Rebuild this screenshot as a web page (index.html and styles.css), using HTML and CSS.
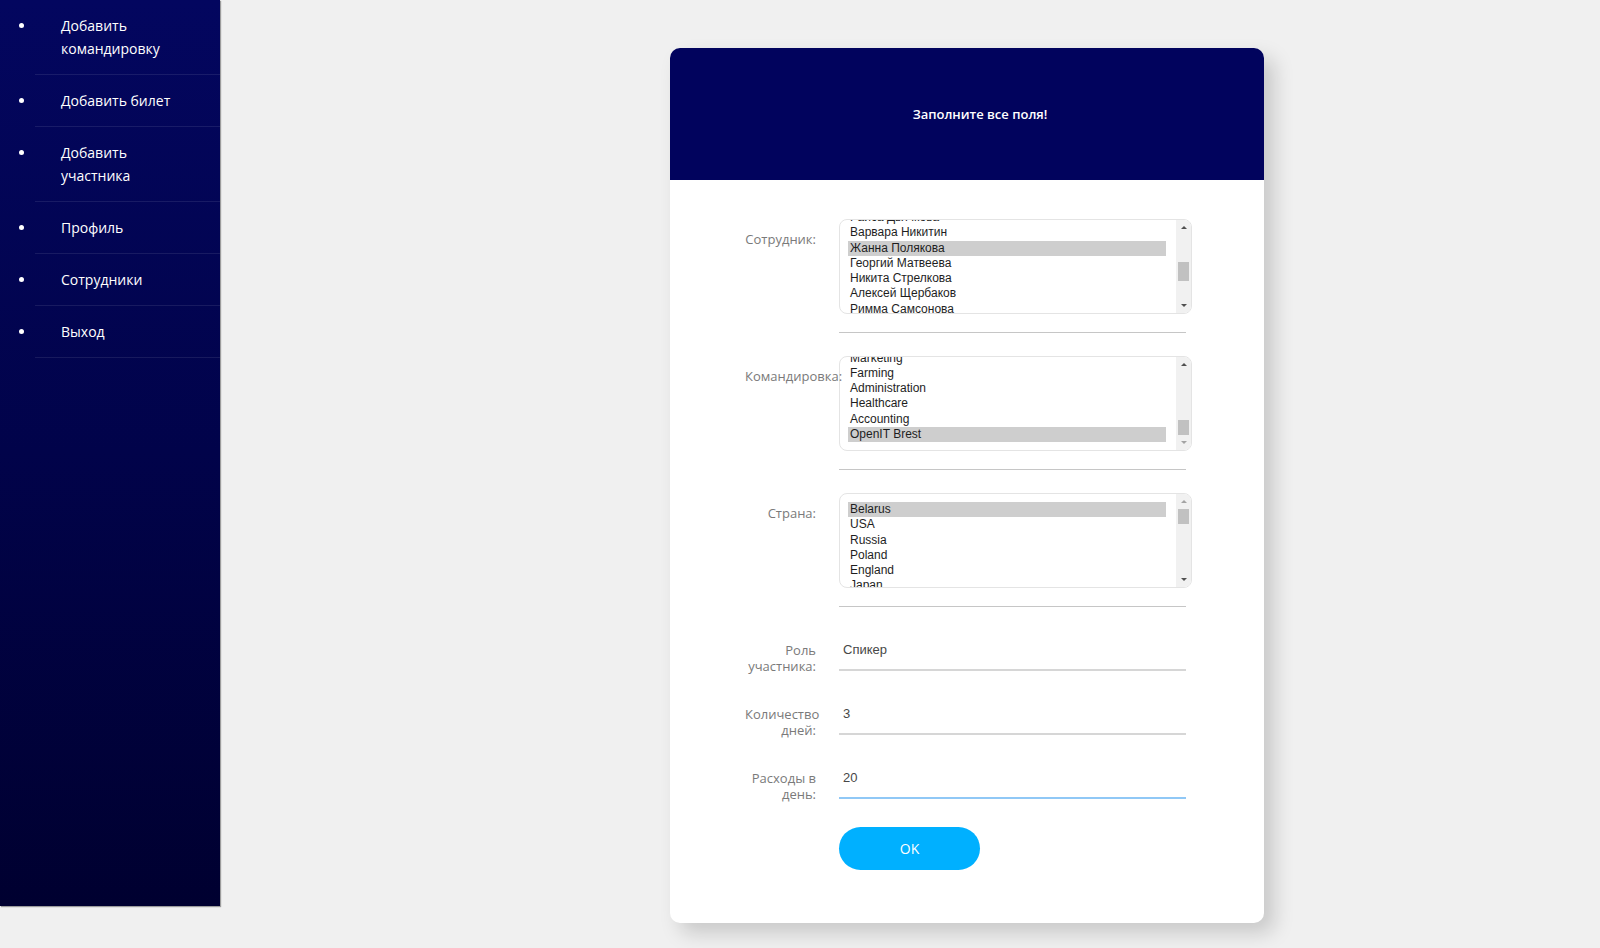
FILE: index.html
```html
<!DOCTYPE html>
<html lang="ru">
<head>
<meta charset="utf-8">
<title>Добавить участника</title>
<link rel="stylesheet" href="styles.css">
</head>
<body>
<div class="page">
  <nav class="sidebar">
    <ul class="menu">
      <li class="menu-item"><a class="menu-link" href="#">Добавить командировку</a></li>
      <li class="menu-item"><a class="menu-link" href="#">Добавить билет</a></li>
      <li class="menu-item"><a class="menu-link" href="#">Добавить участника</a></li>
      <li class="menu-item"><a class="menu-link" href="#">Профиль</a></li>
      <li class="menu-item"><a class="menu-link" href="#">Сотрудники</a></li>
      <li class="menu-item"><a class="menu-link" href="#">Выход</a></li>
    </ul>
  </nav>
  <main class="content">
    <div class="card">
      <div class="card-header">Заполните все поля!</div>
      <form class="card-body">
        <div class="row">
          <label class="lbl">Сотрудник:</label>
          <div class="field field-select">
            <div class="listbox" role="listbox" data-scroll="140">
              <div class="lb-options">
                <div class="lb-gap lb-gap-8" aria-hidden="true"></div>
                <div class="lb-option" role="option">Раиса Дьячкова</div>
                <div class="lb-option" role="option">Варвара Никитин</div>
                <div class="lb-option is-selected" role="option" aria-selected="true">Жанна Полякова</div>
                <div class="lb-option" role="option">Георгий Матвеева</div>
                <div class="lb-option" role="option">Никита Стрелкова</div>
                <div class="lb-option" role="option">Алексей Щербаков</div>
                <div class="lb-option" role="option">Римма Самсонова</div>
                <div class="lb-gap lb-gap-5" aria-hidden="true"></div>
              </div>
              <div class="lb-scrollbar">
                <span class="lb-btn lb-up"></span>
                <div class="lb-track"><div class="lb-thumb"></div></div>
                <span class="lb-btn lb-down"></span>
              </div>
            </div>
          </div>
        </div>
        <div class="row">
          <label class="lbl">Командировка:</label>
          <div class="field field-select">
            <div class="listbox" role="listbox" data-scroll="max">
              <div class="lb-options">
                <div class="lb-gap lb-gap-18" aria-hidden="true"></div>
                <div class="lb-option" role="option">Marketing</div>
                <div class="lb-option" role="option">Farming</div>
                <div class="lb-option" role="option">Administration</div>
                <div class="lb-option" role="option">Healthcare</div>
                <div class="lb-option" role="option">Accounting</div>
                <div class="lb-option is-selected" role="option" aria-selected="true">OpenIT Brest</div>
              </div>
              <div class="lb-scrollbar">
                <span class="lb-btn lb-up"></span>
                <div class="lb-track"><div class="lb-thumb"></div></div>
                <span class="lb-btn lb-down"></span>
              </div>
            </div>
          </div>
        </div>
        <div class="row">
          <label class="lbl">Страна:</label>
          <div class="field field-select">
            <div class="listbox" role="listbox" data-scroll="0">
              <div class="lb-options">
                <div class="lb-option is-selected" role="option" aria-selected="true">Belarus</div>
                <div class="lb-option" role="option">USA</div>
                <div class="lb-option" role="option">Russia</div>
                <div class="lb-option" role="option">Poland</div>
                <div class="lb-option" role="option">England</div>
                <div class="lb-option" role="option">Japan</div>
                <div class="lb-gap lb-gap-18" aria-hidden="true"></div>
              </div>
              <div class="lb-scrollbar">
                <span class="lb-btn lb-up"></span>
                <div class="lb-track"><div class="lb-thumb"></div></div>
                <span class="lb-btn lb-down"></span>
              </div>
            </div>
          </div>
        </div>
        <div class="row">
          <label class="lbl" for="role">Роль участника:</label>
          <div class="field field-input">
            <input class="text-input" id="role" type="text" value="Спикер">
          </div>
        </div>
        <div class="row">
          <label class="lbl" for="days">Количество дней:</label>
          <div class="field field-input">
            <input class="text-input" id="days" type="text" value="3">
          </div>
        </div>
        <div class="row">
          <label class="lbl" for="cost">Расходы в день:</label>
          <div class="field field-input field-active">
            <input class="text-input" id="cost" type="text" value="20">
          </div>
        </div>
        <div class="actions">
          <button class="ok-btn" type="button">OK</button>
        </div>
      </form>
    </div>
  </main>
</div>
<script src="script.js"></script>
</body>
</html>
```

FILE: styles.css
```css
html, body {
  margin: 0;
  padding: 0;
}
body {
  background: #f0f0f0;
  font-family: "Open Sans", "Noto Sans", sans-serif;
}
.page {
  display: flex;
  align-items: flex-start;
}

/* Sidebar */
.sidebar {
  width: 220px;
  height: 906px;
  flex: none;
  background: linear-gradient(to bottom, #03065f 0%, #01034a 50%, #000030 100%);
  box-shadow: 1px 1px 1px rgba(0, 0, 0, 0.35);
}
.menu {
  list-style: none;
  margin: 0;
  padding: 0;
}
.menu-item {
  display: flex;
  align-items: flex-start;
}
.menu-item::before {
  content: "";
  flex: none;
  width: 5px;
  height: 5px;
  border-radius: 50%;
  background: #fff;
  margin: 23px 11px 0 19px;
}
.menu-link {
  flex: 1;
  display: block;
  padding: 14px 30px 14px 26px;
  line-height: 23px;
  font-size: 14px;
  font-weight: 500;
  color: #fff;
  text-decoration: none;
  border-bottom: 1px solid rgba(255, 255, 255, 0.09);
}

/* Content */
.content {
  flex: 1;
}
.card {
  width: 594px;
  margin: 48px 0 26px 450px;
  background: #fff;
  border-radius: 10px;
  box-shadow: 10px 10px 20px rgba(0, 0, 0, 0.17);
  overflow: hidden;
}
.card-header {
  height: 132px;
  background: #01035d;
  color: #fff;
  font-size: 13px;
  font-weight: 600;
  display: flex;
  align-items: center;
  justify-content: center;
  padding-left: 26px;
}
.card-body {
  padding: 16px 78px 53px 75px;
  margin: 0;
}
.row {
  display: flex;
  align-items: flex-start;
  padding-top: 23px;
}
.lbl {
  position: relative;
  z-index: 1;
  width: 71px;
  height: 28px;
  flex: none;
  margin-right: 23px;
  text-align: right;
  font-size: 13px;
  line-height: 16px;
  color: #7a7a7a;
  padding-top: 12px;
}
.field {
  width: 347px;
  flex: none;
}
.field-select {
  padding-bottom: 18px;
  border-bottom: 1px solid #c6c6c6;
}

/* Listbox */
.listbox {
  display: flex;
  width: 353px;
  height: 95px;
  box-sizing: border-box;
  border: 1px solid #e4e4e4;
  border-radius: 8px;
  background: #fff;
  overflow: hidden;
}
.lb-options {
  flex: 1;
  min-width: 0;
  padding: 8px 10px 8px 8px;
  overflow: hidden;
  font-family: "Liberation Sans", Arial, sans-serif;
  font-size: 12px;
  color: #1e1e1e;
}
.lb-option {
  padding: 0 2px;
  line-height: 15.25px;
  height: 15.25px;
  white-space: nowrap;
}
.lb-option.is-selected {
  background: #cecece;
}
.lb-gap-5 {
  height: calc(15.25px * 5);
}
.lb-gap-8 {
  height: calc(15.25px * 8);
}
.lb-gap-18 {
  height: calc(15.25px * 18);
}
.lb-scrollbar {
  width: 15px;
  flex: none;
  display: flex;
  flex-direction: column;
  background: #f1f1f1;
}
.lb-btn {
  flex: none;
  height: 15px;
  display: flex;
  align-items: center;
  justify-content: center;
}
.lb-btn::before {
  content: "";
  width: 0;
  height: 0;
  border-left: 3px solid transparent;
  border-right: 3px solid transparent;
}
.lb-up::before {
  border-bottom: 3px solid #505050;
}
.lb-down::before {
  border-top: 3px solid #505050;
}
.lb-up.is-disabled::before {
  border-bottom-color: #a3a3a3;
}
.lb-down.is-disabled::before {
  border-top-color: #a3a3a3;
}
.lb-track {
  flex: 1;
  display: flex;
  flex-direction: column;
  align-items: center;
}
.lb-thumb {
  width: 11px;
  background: #c1c1c1;
}

/* Inputs */
.field-input {
  border-bottom: 2px solid #d6d6d6;
}
.field-active {
  border-bottom-color: #90c8f6;
}
.text-input {
  display: block;
  width: 100%;
  box-sizing: border-box;
  height: 39px;
  border: 0;
  margin: 0;
  padding: 0 4px;
  background: transparent;
  font-family: "Liberation Sans", Arial, sans-serif;
  font-size: 13px;
  color: #474747;
  outline: none;
}

.actions {
  padding-top: 28px;
  padding-left: 94px;
}
.ok-btn {
  display: block;
  width: 141px;
  height: 43px;
  border: 0;
  border-radius: 22px;
  background: #00b0ff;
  color: #fff;
  font-family: "Open Sans", "Noto Sans", sans-serif;
  font-size: 14px;
  cursor: pointer;
}
```

FILE: script.js
```js
(function () {
  function apply() {
    var boxes = document.querySelectorAll('.listbox');
    for (var i = 0; i < boxes.length; i++) {
      var box = boxes[i];
      var opts = box.querySelector('.lb-options');
      var track = box.querySelector('.lb-track');
      var thumb = box.querySelector('.lb-thumb');
      var up = box.querySelector('.lb-up');
      var down = box.querySelector('.lb-down');
      var max = opts.scrollHeight - opts.clientHeight;
      var want = box.getAttribute('data-scroll');
      var pos = want === 'max' ? max : Math.min(max, parseFloat(want) || 0);
      opts.scrollTop = pos;
      var trackH = track.clientHeight;
      var thumbH = Math.max(12, trackH * opts.clientHeight / opts.scrollHeight);
      var top = max > 0 ? (trackH - thumbH) * pos / max : 0;
      thumb.style.height = thumbH + 'px';
      thumb.style.marginTop = top + 'px';
      up.classList.toggle('is-disabled', pos <= 0);
      down.classList.toggle('is-disabled', pos >= max - 0.5);
    }
  }
  apply();
  window.addEventListener('load', apply);
})();
```
